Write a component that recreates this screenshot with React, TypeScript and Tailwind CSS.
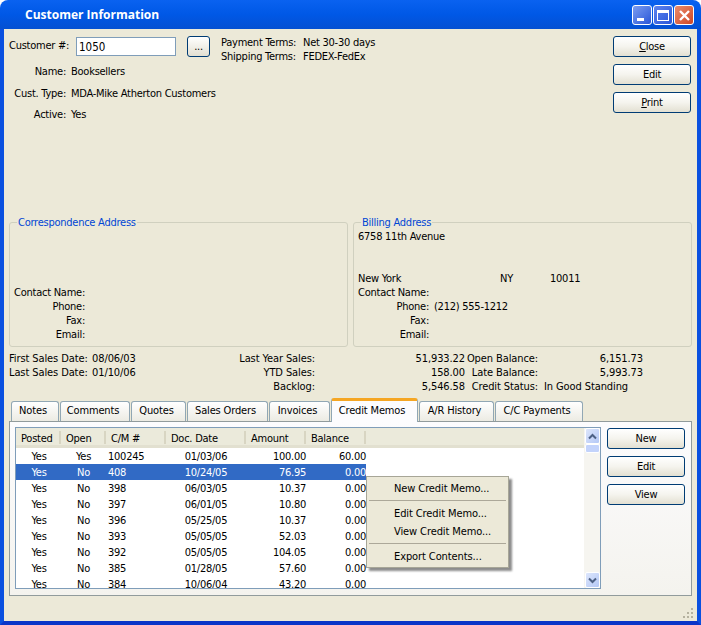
import React from "react";

function Btn({ label, u, className = "" }: { label: string; u?: boolean; className?: string }) {
  return (
    <div className={"h-[21px] w-[78px] shrink-0 flex items-center justify-center rounded-[3px] border border-[#003c74] bg-gradient-to-b from-white via-[#f5f4ee] to-[#e3e0d2] text-black " + className}>
      {u ? <span><span className="underline">{label[0]}</span>{label.slice(1)}</span> : label}
    </div>
  );
}

function Row({ label, value, w, cls = "" }: { label: string; value?: string; w: number; cls?: string }) {
  return (
    <div className={"flex h-[14px] items-center whitespace-nowrap " + cls}>
      <span className="text-right shrink-0" style={{ width: w }}>{label}</span>
      {value ? <span className="ml-[5px]">{value}</span> : null}
    </div>
  );
}

const tabs: [string, number][] = [
  ["Notes", 48], ["Comments", 70], ["Quotes", 55], ["Sales Orders", 81], ["Invoices", 61],
];
const tabs2: [string, number][] = [["A/R History", 75], ["C/C Payments", 88]];

const rows = [
  ["Yes", "Yes", "100245", "01/03/06", "100.00", "60.00"],
  ["Yes", "No", "408", "10/24/05", "76.95", "0.00"],
  ["Yes", "No", "398", "06/03/05", "10.37", "0.00"],
  ["Yes", "No", "397", "06/01/05", "10.80", "0.00"],
  ["Yes", "No", "396", "05/25/05", "10.37", "0.00"],
  ["Yes", "No", "393", "05/05/05", "52.03", "0.00"],
  ["Yes", "No", "392", "05/05/05", "104.05", "0.00"],
  ["Yes", "No", "385", "01/28/05", "57.60", "0.00"],
  ["Yes", "No", "384", "10/06/04", "43.20", "0.00"],
];

const cols: [string, number][] = [["Posted", 45], ["Open", 45], ["C/M #", 60], ["Doc. Date", 80], ["Amount", 60], ["Balance", 60]];

function Tab({ label, w }: { label: string; w: number }) {
  return (
    <div style={{ width: w }} className="h-[20px] mb-[1px] mr-[1px] pb-[2px] pr-[4px] tracking-[-0.15px] whitespace-nowrap shrink-0 flex items-center justify-center rounded-t-[3px] border border-b-0 border-[#91a7b4] bg-gradient-to-b from-white to-[#ecebe3]">
      {label}
    </div>
  );
}

function Chevron({ up }: { up?: boolean }) {
  return (
    <svg width="9" height="7" viewBox="0 0 9 7">
      <path d={up ? "M1 5.5 L4.5 2 L8 5.5" : "M1 1.5 L4.5 5 L8 1.5"} fill="none" stroke="#4d6185" strokeWidth="2" />
    </svg>
  );
}

export default function App() {
  return (
    <div className="relative w-[701px] h-[625px] overflow-hidden bg-white text-[11px] leading-[14px] tracking-[-0.25px] text-black flex flex-col [font-family:'DejaVu_Sans_Condensed','DejaVu_Sans',sans-serif]">
      {/* title bar */}
      <div className="h-[29px] shrink-0 flex items-center rounded-t-[8px] bg-gradient-to-b from-[#0a62f0] via-[#0058e6] to-[#0450d2] pl-[25px] pr-[7px]">
        <span className="flex-1 text-white font-bold text-[12px] tracking-normal [font-family:'Open_Sans',sans-serif]">Customer Information</span>
        <div className="flex gap-[1px] mt-[1px]">
          <div className="w-[20px] h-[20px] rounded-[3px] border border-white bg-gradient-to-br from-[#7c9cf0] to-[#2a55d8] flex items-end justify-start pl-[4px] pb-[3px]">
            <div className="w-[7px] h-[3px] bg-white" />
          </div>
          <div className="w-[20px] h-[20px] rounded-[3px] border border-white bg-gradient-to-br from-[#5d83ee] to-[#2a55d8] flex items-center justify-center">
            <div className="w-[12px] h-[11px] border border-white border-t-[3px]" />
          </div>
          <div className="w-[20px] h-[20px] rounded-[3px] border border-white bg-gradient-to-br from-[#ea8b6c] to-[#cf4522] flex items-center justify-center">
            <svg width="13" height="13" viewBox="0 0 13 13"><path d="M2 2 L11 11 M11 2 L2 11" stroke="#fff" strokeWidth="2.4" /></svg>
          </div>
        </div>
      </div>

      {/* client */}
      <div className="flex-1 border-x-[4px] border-b-[4px] border-x-[#0a50e0] border-b-[#0a35c8] bg-[#ece9d8] flex flex-col pl-[5px] pr-[5px] relative">
        {/* top */}
        <div className="h-[193px] flex pt-[7px] shrink-0">
          <div className="w-[212px] shrink-0">
            <div className="flex items-center h-[21px]">
              <span className="w-[57px] shrink-0 whitespace-nowrap pb-[2px]">Customer #:</span>
              <div className="ml-[10px] w-[100px] h-[19px] border border-[#7f9db9] bg-white pl-[2px] flex items-center tracking-normal text-[11.5px]">1050</div>
              <div className="ml-[11px] w-[23px] h-[21px] rounded-[3px] border border-[#003c74] bg-gradient-to-b from-white to-[#e3e0d2] flex items-center justify-center">...</div>
            </div>
            <Row label="Name:" value="Booksellers" w={57} cls="mt-[8px]" />
            <Row label="Cust. Type:" value="MDA-Mike Atherton Customers" w={57} cls="mt-[8px]" />
            <Row label="Active:" value="Yes" w={57} cls="mt-[7px]" />
          </div>
          <div className="flex-1">
            <div className="whitespace-nowrap h-[14px] flex"><span className="w-[76px]">Payment Terms:</span><span className="ml-[6px]">Net 30-30 days</span></div>
            <div className="whitespace-nowrap h-[14px] flex"><span className="w-[76px]">Shipping Terms:</span><span className="ml-[6px]">FEDEX-FedEx</span></div>
          </div>
          <div className="flex flex-col gap-[7px] mr-[1px]">
            <Btn label="Close" u />
            <Btn label="Edit" />
            <Btn label="Print" u />
          </div>
        </div>

        {/* groups */}
        <div className="h-[125px] flex gap-[5px] shrink-0">
          <div className="relative w-[339px] h-[125px] border border-[#d0d0bf] rounded-[3px] flex flex-col justify-end pb-[4px]">
            <span className="absolute left-[7px] -top-[7px] bg-[#ece9d8] px-[1px] text-[#0046d5]">Correspondence Address</span>
            <Row label="Contact Name:" w={75} />
            <Row label="Phone:" w={75} />
            <Row label="Fax:" w={75} />
            <Row label="Email:" w={75} />
          </div>
          <div className="relative w-[339px] h-[125px] border border-[#d0d0bf] rounded-[3px] flex flex-col justify-end pb-[4px]">
            <span className="absolute left-[7px] -top-[7px] bg-[#ece9d8] px-[1px] text-[#0046d5]">Billing Address</span>
            <div className="flex-1 pl-[4px] pt-[7px]">6758 11th Avenue</div>
            <div className="h-[14px] flex whitespace-nowrap pl-[4px]"><span className="w-[142px]">New York</span><span className="w-[50px]">NY</span><span>10011</span></div>
            <Row label="Contact Name:" w={75} />
            <Row label="Phone:" value="(212) 555-1212" w={75} />
            <Row label="Fax:" w={75} />
            <Row label="Email:" w={75} />
          </div>
        </div>

        {/* stats */}
        <div className="h-[47px] pt-[5px] flex shrink-0 whitespace-nowrap tracking-[-0.1px]">
          <div className="w-[229px] shrink-0">
            <Row label="First Sales Date:" value="08/06/03" w={78} />
            <Row label="Last Sales Date:" value="01/10/06" w={78} />
          </div>
          <div className="w-[77px] shrink-0 text-right">
            <div className="h-[14px]">Last Year Sales:</div>
            <div className="h-[14px]">YTD Sales:</div>
            <div className="h-[14px]">Backlog:</div>
          </div>
          <div className="w-[150px] shrink-0 text-right">
            <div className="h-[14px]">51,933.22</div>
            <div className="h-[14px]">158.00</div>
            <div className="h-[14px]">5,546.58</div>
          </div>
          <div className="w-[73px] shrink-0 text-right">
            <div className="h-[14px]">Open Balance:</div>
            <div className="h-[14px]">Late Balance:</div>
            <div className="h-[14px]">Credit Status:</div>
          </div>
          <div className="w-[105px] shrink-0">
            <div className="h-[14px] text-right">6,151.73</div>
            <div className="h-[14px] text-right">5,993.73</div>
            <div className="h-[14px] pl-[6px]">In Good Standing</div>
          </div>
        </div>

        {/* tabs */}
        <div className="h-[24px] flex items-end pl-[2px] relative z-10 shrink-0 mt-[4px] -mb-[1px]">
          {tabs.map(([l, w]) => <Tab key={l} label={l} w={w} />)}
          <div className="w-[87px] h-[24px] shrink-0 mr-[1px] flex items-center justify-center rounded-t-[3px] border-x border-[#91a7b4] border-t-[3px] border-t-[#f5a623] bg-[#fcfcfe] pb-[2px] pr-[5px] tracking-[-0.15px] whitespace-nowrap">Credit Memos</div>
          {tabs2.map(([l, w]) => <Tab key={l} label={l} w={w} />)}
        </div>

        {/* pane */}
        <div className="h-[175px] w-[683px] shrink-0 border border-[#919b9c] bg-gradient-to-b from-[#fcfcfe] to-[#f4f3ee] flex pt-[5px] pl-[5px]">
          <div className="w-[586px] h-[162px] border border-[#7f9db9] bg-white flex shrink-0 overflow-hidden">
            <div className="flex-1 min-w-0">
              <div className="h-[20px] flex bg-[#ebeadb] border-b-[3px] border-b-[#e2e0d0] pt-[3px]">
                {cols.map(([c, w]) => (
                  <div key={c} style={{ width: w }} className="flex items-center pl-[5px] pt-[2px] h-[13px] border-r-2 border-r-[#d8d5c2]">{c}</div>
                ))}
              </div>
              {rows.map((r, i) => (
                <div key={i} className={"h-[16px] flex items-center " + (i === 1 ? "text-white" : "")}>
                  <div className={"flex items-center h-[16px] pt-[2px] " + (i === 1 ? "bg-[#316ac5]" : "")}>
                    <div className="w-[45px] text-center pl-[1px]">{r[0]}</div>
                    <div className="w-[45px] text-center">{r[1]}</div>
                    <div className="w-[60px] pl-[2px]">{r[2]}</div>
                    <div className="w-[80px] text-center">{r[3]}</div>
                    <div className="w-[60px] text-right">{r[4]}</div>
                    <div className="w-[60px] text-right">{r[5]}</div>
                  </div>
                </div>
              ))}
            </div>
            <div className="w-[16px] h-full shrink-0 bg-[#f6f5f0] flex flex-col items-center">
              <div className="w-[15px] h-[16px] rounded-[2px] bg-gradient-to-br from-[#dde6fb] to-[#b4c8f6] flex items-center justify-center border border-white"><Chevron up /></div>
              <div className="w-[15px] h-[9px] rounded-[2px] bg-[#c3d3fb] border border-white mb-auto" />
              <div className="w-[15px] h-[16px] rounded-[2px] bg-gradient-to-br from-[#dde6fb] to-[#b4c8f6] flex items-center justify-center border border-white"><Chevron /></div>
            </div>
          </div>
          <div className="ml-[6px] pt-[1px] flex flex-col gap-[7px]">
            <Btn label="New" />
            <Btn label="Edit" />
            <Btn label="View" />
          </div>
        </div>

        {/* grip */}
        <div className="absolute right-[3px] bottom-[2px]">
          <svg width="11" height="11" viewBox="0 0 11 11" fill="#b5b29f">
            <rect x="8" y="0" width="2" height="2" /><rect x="4" y="4" width="2" height="2" /><rect x="8" y="4" width="2" height="2" /><rect x="0" y="8" width="2" height="2" /><rect x="4" y="8" width="2" height="2" /><rect x="8" y="8" width="2" height="2" />
          </svg>
        </div>

        {/* context menu */}
        <div className="absolute left-[362px] top-[447px] w-[143px] h-[92px] border border-[#a7a697] bg-[#ece9d8] shadow-[3px_3px_2px_rgba(0,0,0,0.45)] pt-[5px] z-20 whitespace-nowrap tracking-[-0.1px]">
          <div className="h-[14px] pl-[27px]">New Credit Memo...</div>
          <div className="h-px bg-[#aca899] mx-[2px] mt-[4px] mb-[6px]" />
          <div className="h-[14px] pl-[27px]">Edit Credit Memo...</div>
          <div className="h-[14px] pl-[27px] mt-[4px]">View Credit Memo...</div>
          <div className="h-px bg-[#aca899] mx-[2px] mt-[4px] mb-[6px]" />
          <div className="h-[14px] pl-[27px]">Export Contents...</div>
        </div>
      </div>
    </div>
  );
}
